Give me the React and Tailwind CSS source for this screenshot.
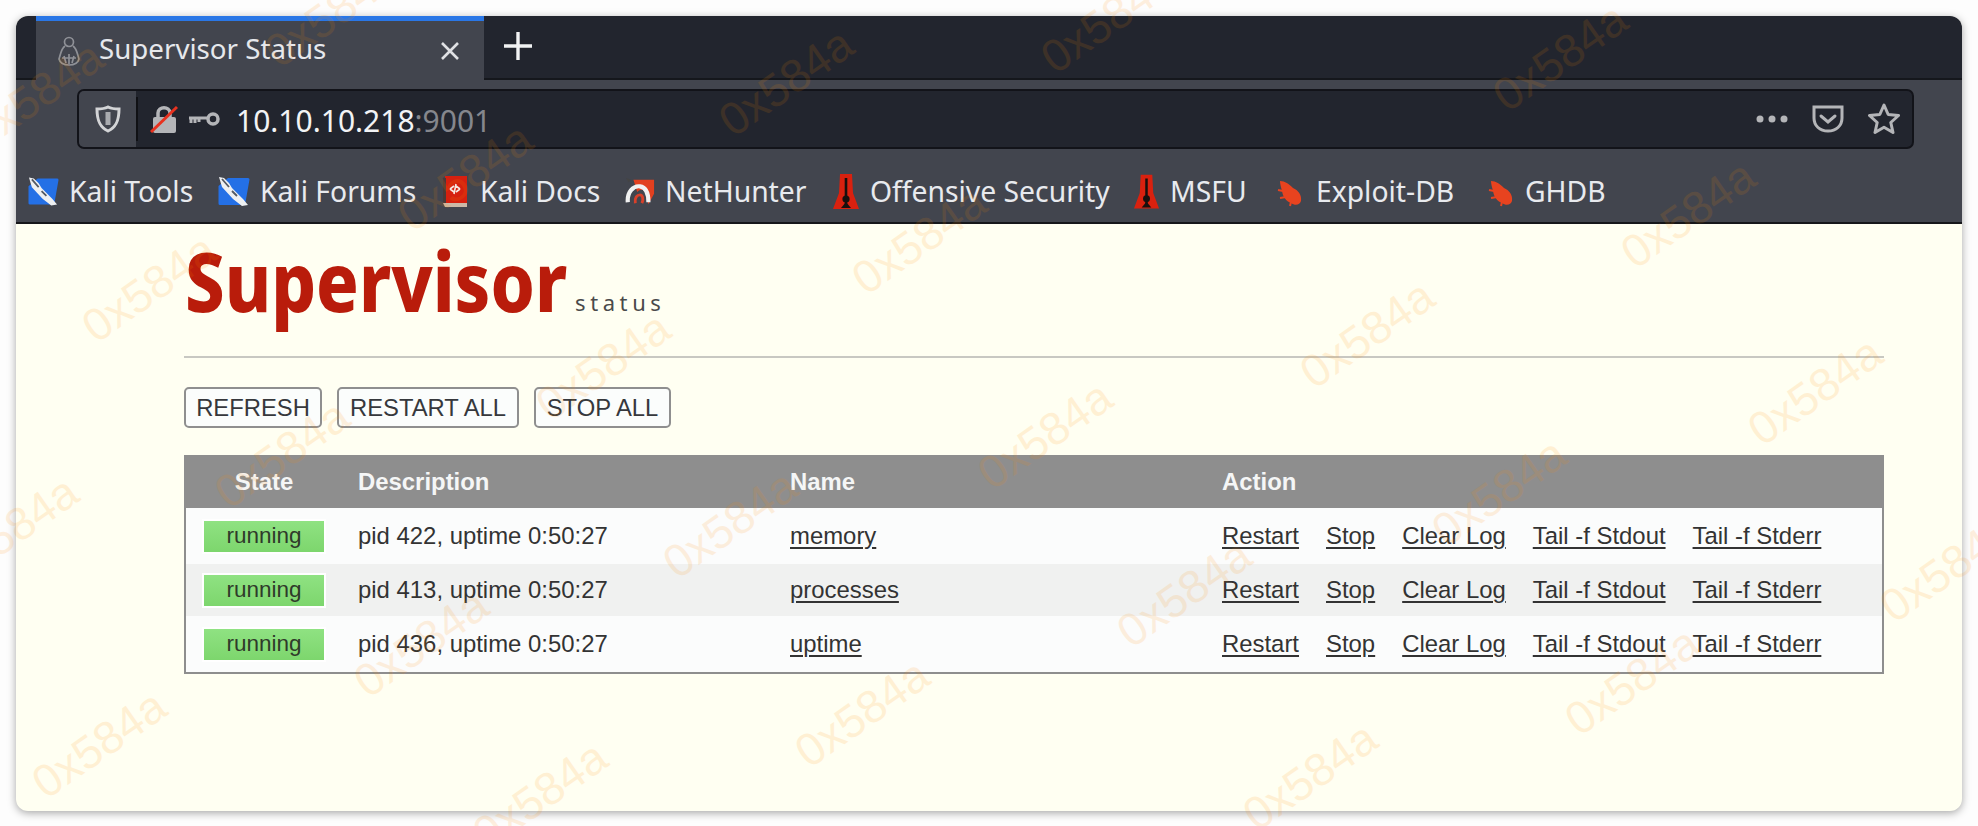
const WM = [[788,85],[1562,60],[334,16],[38,98],[467,180],[151,291],[921,243],[1690,217],[605,369],[1369,337],[1817,394],[284,457],[1047,438],[1501,495],[732,527],[1186,596],[1949,571],[13,533],[423,646],[864,716],[1634,684],[101,747],[542,798],[1312,779],[1110,22]];

function Kali() {
  return (
    <svg width="32" height="29" viewBox="0 0 32 29">
      <path d="M10 1 H30 a1.500 1.500 0 0 1 1.500 1.500 L27 28 H2 a1.500 1.500 0 0 1-1.500-1.500 V9 Z" fill="#2470e6" />
      <path d="M1 0 L6 1 L11 6 L14 11 L25 22 L30 28 L24 29 L15 22 L4 10 Z" fill="#eef0f2" />
      <path d="M4 2 L11 10 M14 14 L19 19" stroke="#555a63" strokeWidth="1.800" />
    </svg>
  );
}
function Docs() {
  return (
    <svg width="26" height="33" viewBox="0 0 26 33">
      <path d="M3 1 H25 V28 H3 Z" fill="#d6200f" />
      <path d="M1 3 H4 V28 H1 Z" fill="#4b3a38" />
      <path d="M1 28 H25 V32 H3 Z" fill="#cbb9a8" />
      <path d="M8 14 L12 11 M8 14 L12 17 M18 14 L14 11 M18 14 L14 17 M14 9 L12 19" stroke="#f6e6e0" strokeWidth="1.600" fill="none" />
    </svg>
  );
}
function NetHunter() {
  return (
    <svg width="32" height="31" viewBox="0 0 32 31">
      <path d="M9 3 H31 V18 L25 29 L22 17 C20 12 15 13 13 16 Z" fill="#e2401f" />
      <path d="M1 1 L6 3 L4 6 Z" fill="#444" />
      <path d="M3 27 C2 16 9 9 16 10 C23 11 25 19 25 27" fill="none" stroke="#f1f1f1" strokeWidth="4.500" />
      <path d="M11 28 C10 22 13 19 16 19 C19 19 20 24 18 28" fill="none" stroke="#d8402a" strokeWidth="3" />
    </svg>
  );
}
function Rocket() {
  return (
    <svg width="28" height="37" viewBox="0 0 28 37">
      <path d="M8 1 H20 L21 20 L27 36 H1 L7 20 Z" fill="#d9210f" />
      <path d="M14 5 V32" stroke="#17100e" strokeWidth="2.600" />
      <circle cx="14" cy="26" r="3.600" fill="#17100e" />
      <path d="M9 35 L14 29 L19 35 Z" fill="#17100e" />
    </svg>
  );
}
function Bug() {
  return (
    <svg width="26" height="30" viewBox="0 0 26 30">
      <path d="M3 4 C8 4 12 7 16 11 C21 13 25 18 24 24 C23 28 18 29 14 26 C9 24 6 20 5 14 C4 10 3 7 3 4 Z" fill="#e8431f" />
      <path d="M1 13 L6 14 M3 21 L9 20 M13 29 L14 25" stroke="#e8431f" strokeWidth="2" />
    </svg>
  );
}
function Favicon() {
  return (
    <svg width="22" height="30" viewBox="0 0 22 30" fill="none" stroke="#8f9197" strokeWidth="1.700">
      <circle cx="11" cy="6" r="4.500" />
      <path d="M7 10 C3 13 3 17 1 23 C2 27 6 29 11 29 C16 29 20 27 21 23 C19 17 19 13 15 10" />
      <path d="M6 20 L8 27 M11 18 V28 M16 20 L14 27 M4 22 H18" />
    </svg>
  );
}
const BOOK = [
  [Kali, "Kali Tools", "w-[31px]", "ml-[12px]", "w-[125px]"],
  [Kali, "Kali Forums", "w-[32px]", "ml-[24px]", "w-[155px]"],
  [Docs, "Kali Docs", "w-[28px]", "ml-[27px]", "w-[118px]"],
  [NetHunter, "NetHunter", "w-[30px]", "ml-[27px]", "w-[138px]"],
  [Rocket, "Offensive Security", "w-[28px]", "ml-[29px]", "w-[235px]"],
  [Rocket, "MSFU", "w-[27px]", "ml-[28px]", "w-[79px]"],
  [Bug, "Exploit-DB", "w-[29px]", "ml-[28px]", "w-[141px]"],
  [Bug, "GHDB", "w-[27px]", "ml-[31px]", "w-[82px]"],
];
const ROWS = [
  ["pid 422, uptime 0:50:27", "memory", "h-[56px] bg-[#fbfcfc]"],
  ["pid 413, uptime 0:50:27", "processes", "h-[52px] bg-[#f0f1f0]"],
  ["pid 436, uptime 0:50:27", "uptime", "h-[56px] bg-[#fbfcfc]"],
];
const ACTIONS = ["Restart", "Stop", "Clear Log", "Tail -f Stdout", "Tail -f Stderr"];
const UI = { fontFamily: '"Noto Sans", sans-serif' };

export default function App() {
  return (
    <div className="relative h-[826px] w-full overflow-hidden bg-[#fdfdfd] pt-[16px] pl-[16px] pr-[16px] pb-[15px]">
      <div className="flex h-full flex-col overflow-hidden rounded-[12px] bg-[#fffff2] shadow-[0_2px_8px_rgba(0,0,0,0.35)]">
        <div className="flex h-[64px] shrink-0 border-b-2 border-[#15171c] bg-[#22252e] pl-[20px]" style={UI}>
          <div className="-mb-[2px] flex h-[64px] w-[448px] items-center border-t-[5px] border-[#2a77e6] bg-[#42454e] pl-[22px] pr-[24px]">
            <Favicon />
            <span className="-mt-[3px] ml-[19px] flex-1 text-[27.700px] leading-none text-[#e6e8ec]">Supervisor Status</span>
            <svg width="20" height="20" viewBox="0 0 20 20" stroke="#e0e1e4" strokeWidth="2.600"><path d="M2 2 L18 18 M18 2 L2 18" /></svg>
          </div>
          <svg className="ml-[20px] mt-[16px]" width="28" height="28" viewBox="0 0 28 28" stroke="#f2f3f4" strokeWidth="3.400"><path d="M14 0 V28 M0 14 H28" /></svg>
        </div>

        <div className="flex h-[79px] shrink-0 items-start bg-[#42454e] pl-[61px] pr-[48px] pt-[9px]">
          <div className="flex h-[60px] flex-1 items-center rounded-[7px] border-2 border-[#121319] bg-[#22252e]" style={UI}>
            <div className="flex h-full w-[57px] items-center justify-center rounded-l-[5px] bg-[#42454e]">
              <svg width="26" height="28" viewBox="0 0 26 28" fill="none" stroke="#d3d4d6" strokeWidth="3">
                <path d="M13 2 C17 4 20 4 24 4 C24 14 22 22 13 26 C4 22 2 14 2 4 C6 4 9 4 13 2 Z" />
                <path d="M13 7 V20" strokeWidth="5" stroke="#a9abaf" />
              </svg>
            </div>
            <div className="h-[44px] w-[2px] bg-[#101115]" />
            <svg className="ml-[12px]" width="28" height="28" viewBox="0 0 28 28">
              <path d="M8 12 V8 C8 1 20 1 20 8 V12" fill="none" stroke="#b4b5b8" strokeWidth="3.500" />
              <rect x="3" y="12" width="23" height="16" rx="2" fill="#b4b5b8" />
              <path d="M1 27 L27 2" stroke="#e8321f" strokeWidth="3" />
            </svg>
            <svg className="ml-[10px]" width="32" height="14" viewBox="0 0 32 14" fill="none" stroke="#b4b5b8">
              <circle cx="25" cy="7" r="5" strokeWidth="3.500" />
              <path d="M19 6 H1 M3 6 V11 M7 6 V11 M11 6 V10" strokeWidth="3" />
            </svg>
            <span className="ml-[16px] mt-[3px] text-[30px] leading-none text-[#f2f3f5]">10.10.10.218<span className="text-[#85878d]">:9001</span></span>
            <div className="ml-auto flex items-center pr-[12px]">
              <svg width="32" height="8" viewBox="0 0 32 8" fill="#b4b5b8"><circle cx="4" cy="4" r="3.500" /><circle cx="16" cy="4" r="3.500" /><circle cx="28" cy="4" r="3.500" /></svg>
              <svg className="ml-[24px]" width="32" height="28" viewBox="0 0 32 28" fill="none" stroke="#b4b5b8" strokeWidth="3">
                <path d="M2 2 H30 V13 C30 21 24 26 16 26 C8 26 2 21 2 13 Z" />
                <path d="M9 11 L16 17 L23 11" strokeLinecap="round" />
              </svg>
              <svg className="ml-[24px]" width="32" height="32" viewBox="0 0 32 32" fill="none" stroke="#b4b5b8" strokeWidth="3" strokeLinejoin="round">
                <path d="M16 2 L20.200 11.500 L30.500 12.500 L22.800 19.500 L25 29.500 L16 24.300 L7 29.500 L9.200 19.500 L1.500 12.500 L11.800 11.500 Z" />
              </svg>
            </div>
          </div>
        </div>

        <div className="flex h-[65px] shrink-0 items-center border-b-2 border-[#16171b] bg-[#42454e] pt-[2px] text-[28.300px] leading-none text-[#e8eaee]" style={UI}>
          {BOOK.map(([Icon, label, w, ml, tw]) => (
            <div key={label} className={"flex items-center " + ml}>
              <div className={"flex " + w}><Icon /></div>
              <span className={"ml-[10px] whitespace-nowrap " + tw}>{label}</span>
            </div>
          ))}
        </div>

        <div className="flex-1 pl-[168px] pr-[78px] text-[#333333]" style={{ fontFamily: '"Liberation Sans", Arial, sans-serif' }}>
          <div className="flex h-[134px] items-start border-b-2 border-[#c8c8c2]">
            <span className="ml-[1px] mt-[1px] w-[390px] origin-left scale-x-[0.86] text-[82px] font-extrabold leading-[110px] text-[#b91c0b]" style={UI}>Supervisor</span>
            <span className="mt-[67px] text-[22px] leading-none tracking-[4.600px] text-[#4a4a4a]" style={UI}>status</span>
          </div>

          <div className="mt-[29px] flex gap-[15px]">
            {[["REFRESH", "w-[138px]"], ["RESTART ALL", "w-[182px]"], ["STOP ALL", "w-[137px]"]].map(([t, w]) => (
              <button key={t} className={"flex h-[41px] items-center justify-center rounded-[5px] border-2 border-[#8f8f8f] bg-[#fbfdfc] text-[23.800px] leading-none text-[#36383c] " + w}>{t}</button>
            ))}
          </div>

          <div className="mt-[27px] border-x-2 border-b-2 border-[#8e8e8e] text-[23.900px] leading-none">
            <div className="grid h-[53px] grid-cols-[172px_432px_432px_1fr] items-center bg-[#8e8e8e] font-bold text-[#f5f6f6]">
              <div className="pr-[16px] text-center">State</div>
              <div>Description</div>
              <div>Name</div>
              <div>Action</div>
            </div>
            {ROWS.map(([desc, name, cls]) => (
              <div key={name} className={"grid grid-cols-[172px_432px_432px_1fr] items-center " + cls}>
                <div className="flex justify-center pr-[16px]">
                  <div className="flex h-[35px] w-[124px] items-center justify-center border-2 border-white bg-linear-to-b from-[#8fe282] to-[#7dd66d] text-[22.500px] text-[#2f3a2a]">running</div>
                </div>
                <div>{desc}</div>
                <div><a className="underline decoration-2 underline-offset-[3px]">{name}</a></div>
                <div className="flex gap-[27px]">
                  {ACTIONS.map((a) => (<a key={a} className="underline decoration-2 underline-offset-[3px]">{a}</a>))}
                </div>
              </div>
            ))}
          </div>
        </div>
      </div>

      <svg className="pointer-events-none absolute inset-0" width="1978" height="826" style={{ fontFamily: '"Liberation Sans", sans-serif' }}>
        {WM.map(([x, y]) => (
          <text key={x + "-" + y} x={x} y={y} transform={`rotate(-35 ${x} ${y})`} textAnchor="middle" dominantBaseline="middle" fontSize="46" fill="#ff8a00" opacity="0.12">0x584a</text>
        ))}
      </svg>
    </div>
  );
}
